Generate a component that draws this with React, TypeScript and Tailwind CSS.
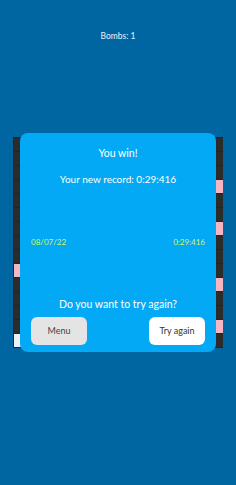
const ROWS = 15;
const COLS = 15;

// revealed cells that peek out around the dialog
const pink = new Set(['3-14', '6-14', '10-14', '13-14', '9-0']);
const light = new Set(['14-0']);

function cellColor(r: number, c: number) {
  const k = `${r}-${c}`;
  if (pink.has(k)) return 'bg-[#f7b5c2]';
  if (light.has(k)) return 'bg-[#eeeef6]';
  return 'bg-[#2c2c2c]';
}

function Board() {
  const cells = [];
  for (let r = 0; r < ROWS; r++) {
    for (let c = 0; c < COLS; c++) {
      cells.push(<div key={`${r}-${c}`} className={`h-[13px] w-[13px] ${cellColor(r, c)}`} />);
    }
  }
  return (
    <div className="grid w-[210px] grid-cols-[repeat(15,13px)] gap-px bg-[#242424] p-px">
      {cells}
    </div>
  );
}

export default function App() {
  return (
    <div
      className="relative flex h-[485px] w-[236px] flex-col items-center bg-[#0066a1] text-white"
      style={{ fontFamily: 'Lato, "Open Sans", sans-serif' }}
    >
      <p className="mt-[30px] text-[8.5px] leading-[12px] text-[#e6f0ff]">Bombs: 1</p>
      <div className="mt-[95px]">
        <Board />
      </div>

      <div className="absolute left-[20px] top-[133px] flex h-[219px] w-[196px] flex-col items-center rounded-[8px] bg-[#03a9f4] px-[11px] pt-[13px]">
        <p className="text-[10.5px] leading-[14px]">You win!</p>
        <p className="mt-[12px] text-[10px] leading-[14px]">Your new record: 0:29:416</p>
        <div className="mt-[50px] flex w-full justify-between text-[8px] leading-[12px] text-[#d4f55a]">
          <span>08/07/22</span>
          <span>0:29:416</span>
        </div>
        <p className="mt-[49px] text-[10.5px] leading-[14px]">Do you want to try again?</p>
        <div className="mt-[6px] flex w-full justify-between">
          <button className="h-[28px] w-[56px] rounded-[6px] bg-[#e4e4e4] text-[9px] text-[#444]">Menu</button>
          <button className="h-[28px] w-[56px] rounded-[6px] bg-white text-[9px] text-[#333]">Try again</button>
        </div>
      </div>
    </div>
  );
}
